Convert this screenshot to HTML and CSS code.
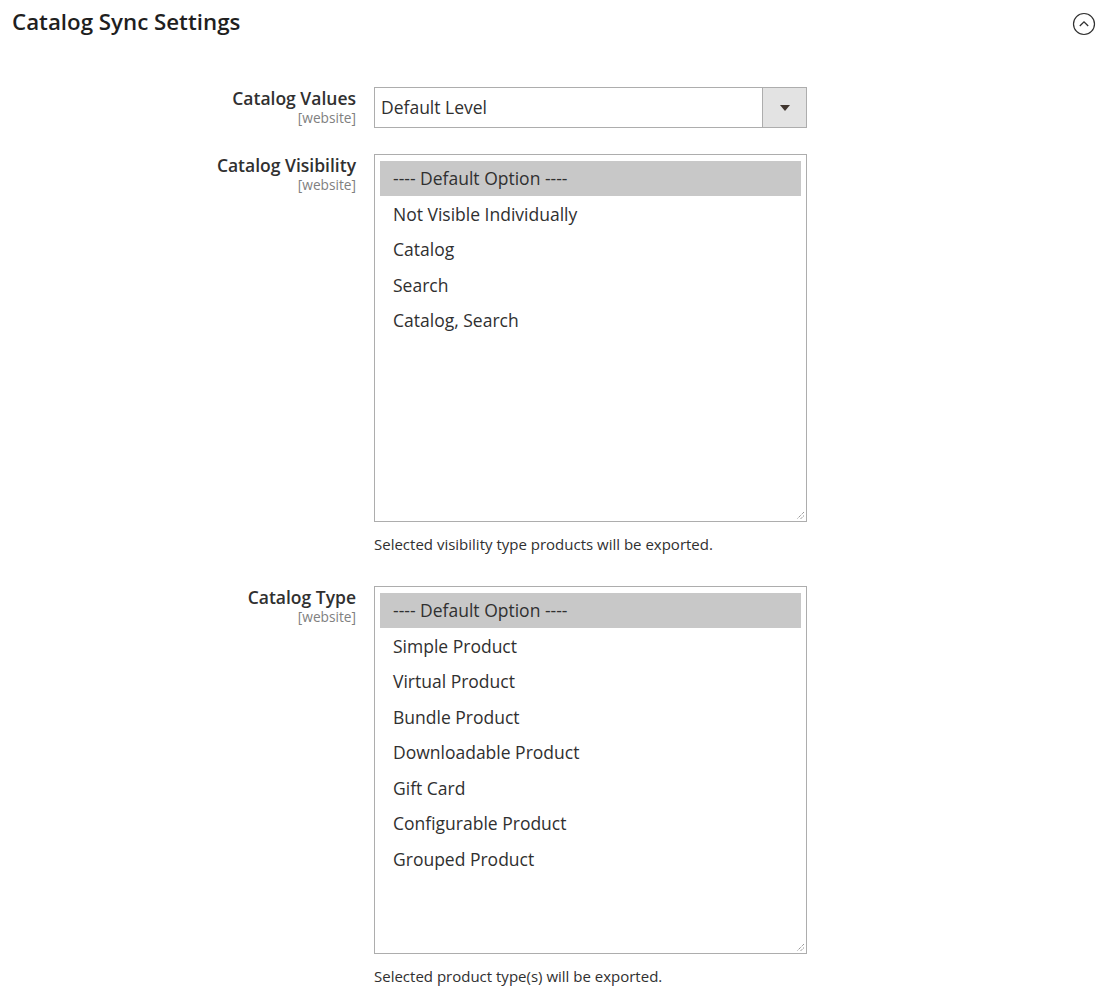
FILE: index.html
```html
<!DOCTYPE html>
<html lang="en">
<head>
<meta charset="utf-8">
<title>Catalog Sync Settings</title>
<link rel="stylesheet" href="styles.css">
</head>
<body>
<div class="section">
  <div class="section-head">
    <h2 class="title">Catalog Sync Settings</h2>
    <span class="collapse">
      <svg width="24" height="24" viewBox="0 0 24 24"><circle cx="12" cy="12" r="10.5" fill="none" stroke="#303030" stroke-width="1.2"/><path d="M7.8 14 L12 9.8 L16.2 14" fill="none" stroke="#303030" stroke-width="1.3"/></svg>
    </span>
  </div>
  <div class="form">
    <div class="label"><div class="name">Catalog Values</div><div class="scope">[website]</div></div>
    <div class="control">
      <div class="select"><span class="select-value">Default Level</span><span class="select-btn"><span class="tri"></span></span></div>
    </div>

    <div class="label"><div class="name">Catalog Visibility</div><div class="scope">[website]</div></div>
    <div class="control">
      <div class="listbox">
        <div class="opt selected">---- Default Option ----</div>
        <div class="opt">Not Visible Individually</div>
        <div class="opt">Catalog</div>
        <div class="opt">Search</div>
        <div class="opt">Catalog, Search</div>
        <svg class="grip" width="9" height="9" viewBox="0 0 9 9"><path d="M8 1 L1 8 M8 4.5 L4.5 8" stroke="#6e6e6e" stroke-width="1" stroke-dasharray="1 1"/></svg>
      </div>
      <p class="note">Selected visibility type products will be exported.</p>
    </div>

    <div class="label"><div class="name">Catalog Type</div><div class="scope">[website]</div></div>
    <div class="control">
      <div class="listbox">
        <div class="opt selected">---- Default Option ----</div>
        <div class="opt">Simple Product</div>
        <div class="opt">Virtual Product</div>
        <div class="opt">Bundle Product</div>
        <div class="opt">Downloadable Product</div>
        <div class="opt">Gift Card</div>
        <div class="opt">Configurable Product</div>
        <div class="opt">Grouped Product</div>
        <svg class="grip" width="9" height="9" viewBox="0 0 9 9"><path d="M8 1 L1 8 M8 4.5 L4.5 8" stroke="#6e6e6e" stroke-width="1" stroke-dasharray="1 1"/></svg>
      </div>
      <p class="note">Selected product type(s) will be exported.</p>
    </div>
  </div>
</div>
</body>
</html>
```
FILE: styles.css
```css
html, body {
  margin: 0;
  padding: 0;
  background: #fff;
}
body {
  font-family: "Open Sans", "Liberation Sans", sans-serif;
  color: #303030;
}
.section-head {
  display: flex;
  align-items: center;
  justify-content: space-between;
  padding: 0 13px 0 12px;
  height: 46px;
}
.title {
  margin: 0;
  font-size: 22.3px;
  font-weight: 600;
  color: #1f1f1f;
  line-height: 1;
  position: relative;
  top: -1px;
}
.collapse {
  display: flex;
  position: relative;
  top: 1px;
}
.form {
  display: grid;
  grid-template-columns: 356px 433px;
  column-gap: 18px;
  padding-top: 41px;
}
.label {
  text-align: right;
  padding-top: 1px;
}
.name {
  font-size: 17.5px;
  font-weight: 600;
  color: #303030;
  line-height: 21px;
}
.scope {
  font-size: 13.7px;
  color: #808080;
  line-height: 17px;
}
.control {
  margin-bottom: 26px;
}
.select {
  display: flex;
  height: 41px;
  border: 1px solid #adadad;
  box-sizing: border-box;
}
.select-value {
  flex: 1;
  font-size: 17.5px;
  line-height: 39px;
  padding-left: 6px;
  color: #303030;
}
.select-btn {
  width: 43px;
  background: #e3e3e3;
  border-left: 1px solid #adadad;
  display: flex;
  align-items: center;
  justify-content: center;
}
.tri {
  width: 0;
  height: 0;
  border-left: 5px solid transparent;
  border-right: 5px solid transparent;
  border-top: 6px solid #41362f;
}
.listbox {
  position: relative;
  height: 368px;
  box-sizing: border-box;
  border: 1px solid #adadad;
  padding: 6px 5px;
}
.opt {
  height: 35.5px;
  line-height: 35px;
  font-size: 17.5px;
  padding-left: 13px;
  color: #303030;
}
.opt.selected {
  background: #c8c8c8;
  height: 35px;
  margin-bottom: 0.5px;
}
.grip {
  position: absolute;
  right: 1px;
  bottom: 1px;
}
.control:has(.note) {
  margin-bottom: 32px;
}
.note {
  margin: 12px 0 0;
  font-size: 15px;
  line-height: 20px;
  color: #303030;
}
```
